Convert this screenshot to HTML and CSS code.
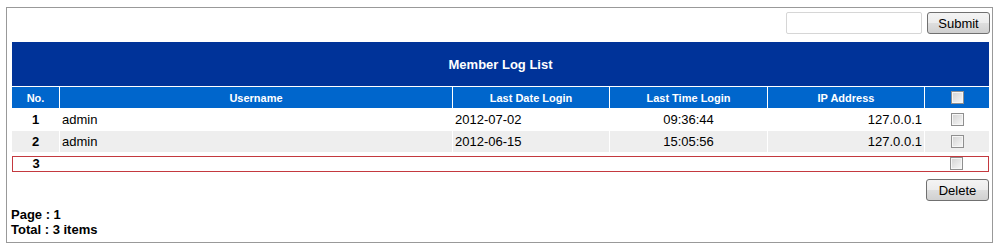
FILE: index.html
```html
<!DOCTYPE html>
<html lang="en">
<head>
  <meta charset="UTF-8">
  <title>Member Log List</title>
  <link rel="stylesheet" href="styles.css">
</head>
<body>
  <div class="panel">
    <!-- Search bar -->
    <div class="search">
      <input type="text" class="search-input">
      <button class="btn">Submit</button>
    </div>

    <!-- Log list -->
    <table class="loglist">
      <colgroup>
        <col class="c-no">
        <col class="c-user">
        <col class="c-date">
        <col class="c-time">
        <col class="c-ip">
        <col class="c-check">
      </colgroup>
      <thead>
        <tr><th colspan="6" class="title">Member Log List</th></tr>
        <tr class="head">
          <th>No.</th>
          <th>Username</th>
          <th>Last Date Login</th>
          <th>Last Time Login</th>
          <th>IP Address</th>
          <th><input type="checkbox" class="chk"></th>
        </tr>
      </thead>
      <tbody>
        <tr>
          <td class="no">1</td>
          <td>admin</td>
          <td>2012-07-02</td>
          <td class="time">09:36:44</td>
          <td class="ip">127.0.0.1</td>
          <td class="check"><input type="checkbox" class="chk"></td>
        </tr>
        <tr class="alt">
          <td class="no">2</td>
          <td>admin</td>
          <td>2012-06-15</td>
          <td class="time">15:05:56</td>
          <td class="ip">127.0.0.1</td>
          <td class="check"><input type="checkbox" class="chk"></td>
        </tr>
      </tbody>
    </table>

    <!-- Current row -->
    <div class="addrow">
      <span class="no">3</span>
      <span class="check"><input type="checkbox" class="chk"></span>
    </div>

    <div class="actions">
      <button class="btn">Delete</button>
    </div>

    <div class="summary">
      Page : 1<br>
      Total : 3 items
    </div>
  </div>
</body>
</html>
```

FILE: styles.css
```css
/* Base */
* { box-sizing: border-box; }
body {
  margin: 7px 8px 0 6px;
  font-family: "Liberation Sans", Arial, sans-serif;
  font-size: 13px;
  color: #000;
  background: #fff;
}
.panel {
  border: 1px solid #999;
  padding: 4px 2px 5px 4px;
}
/* Search bar */
.search {
  display: flex;
  justify-content: flex-end;
  gap: 5px;
  margin-bottom: 7px;
}
.search-input {
  width: 136px;
  height: 22px;
  margin: 0;
  border: 1px solid #d6d6d6;
  border-radius: 2px;
  background: #fff;
}
/* Buttons */
.btn {
  width: 63px;
  height: 22px;
  margin: 0;
  padding: 0;
  font: 13px "Liberation Sans", Arial, sans-serif;
  color: #000;
  border: 1px solid #707070;
  border-radius: 3px;
  background: linear-gradient(#f4f4f4 0%, #ececec 50%, #dedede 51%, #d0d0d0 100%);
}
/* Table */
.loglist {
  width: 100%;
  table-layout: fixed;
  border-collapse: separate;
  border-spacing: 1px;
  background: #fff;
}
.c-no { width: 47px; }
.c-user { width: 392px; }
.c-date { width: 156px; }
.c-time { width: 157px; }
.c-ip { width: 156px; }
.c-check { width: 64px; }
.loglist .title {
  height: 44px;
  background: #003399;
  color: #fff;
  font-size: 13px;
  font-weight: bold;
}
.head th {
  height: 21px;
  padding: 0;
  background: #0066cc;
  color: #fff;
  font-size: 11px;
  font-weight: bold;
}
.loglist td {
  height: 21px;
  padding: 0 2px;
  font-size: 13px;
}
.loglist .alt td { background: #eeeeee; }
.loglist td.no { text-align: center; font-weight: bold; }
.loglist td.time { text-align: center; }
.loglist td.ip { text-align: right; }
/* Checkbox */
.chk {
  appearance: none;
  -webkit-appearance: none;
  display: block;
  width: 13px;
  height: 13px;
  margin: 0 auto;
  border: 1px solid #8f8f8f;
  box-shadow: inset 0 0 0 1px #f6f6f6;
  background: linear-gradient(135deg, #d2d2d2, #f8f8f8);
}
/* Current row */
.addrow {
  display: flex;
  align-items: flex-start;
  height: 16px;
  margin: 3px 1px 0;
  border: 1px solid #c4393f;
  line-height: 14px;
}
.addrow .no {
  width: 46px;
  text-align: center;
  font-weight: bold;
}
.addrow .check {
  width: 63px;
  margin-left: auto;
}
/* Footer */
.actions {
  display: flex;
  justify-content: flex-end;
  margin-top: 7px;
  padding-right: 1px;
}
.summary {
  margin-top: 6px;
  font-weight: bold;
  line-height: 15px;
}
```
